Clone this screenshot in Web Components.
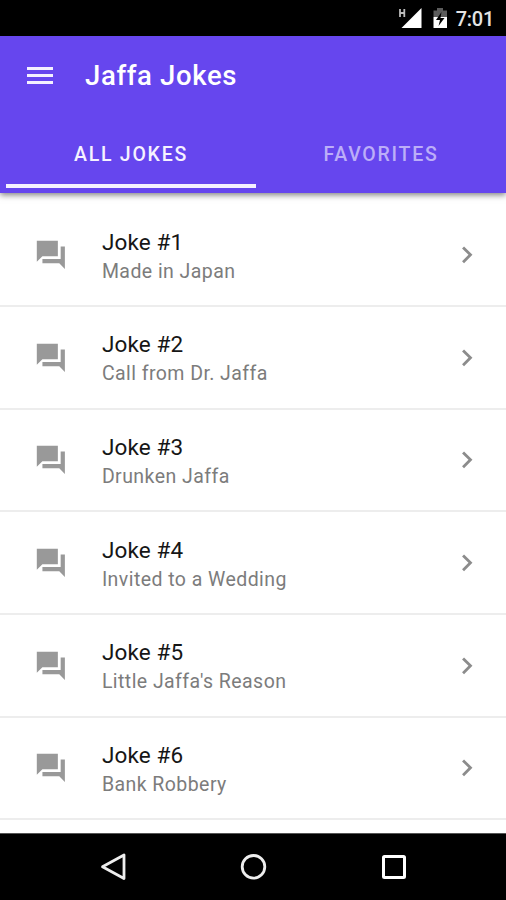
<!DOCTYPE html>
<html lang="en">
<head>
<meta charset="utf-8">
<title>Jaffa Jokes</title>
<style>
html,body{margin:0;height:100%;overflow:hidden;background:#fff;font-family:Roboto,"Noto Sans",sans-serif}
</style>
</head>
<body>
<jokes-app></jokes-app>
<script>
const define = (name, html) => customElements.define(name, class extends HTMLElement {
  constructor() {
    super();
    const t = document.createElement('template');
    t.innerHTML = html;
    this.attachShadow({mode: 'open'}).append(t.content.cloneNode(true));
  }
});

define('status-bar', `<style>
:host{display:flex;height:36px;flex:none;background:#000;color:#e4e4e4;align-items:center;justify-content:flex-end;padding-right:12px;box-sizing:border-box}
svg{display:block;flex:none}
span{font-size:20px;line-height:24px;font-weight:500;letter-spacing:-.25px;margin:2px 0 0 8px}
</style>
<svg width="26" height="24" viewBox="398 6 26 24"><path d="M400 9v8M404.300 9v8M400 13h4.300" fill="none" stroke="#bbb" stroke-width="1.800"/><path d="M421.5 8v20H401.5Z" fill="#fff"/></svg>
<svg width="16" height="24" viewBox="432 6 16 24" style="margin-left:8px"><path d="M433.5 10.500h3.500V8h6v2.500h4V17h-13.500Z" fill="#5c5c5c"/><path d="M433.500 17H447v11h-13.500Z" fill="#fff"/><path d="M441.500 12l-5.500 8h4l-1.500 6 6-8h-4Z" fill="#000"/></svg>
<span>7:01</span>`);

define('tab-item', `<style>
:host{display:flex;flex:1;align-items:center;justify-content:center;height:66px;box-sizing:border-box;padding-top:3px;border-bottom:4px solid transparent;color:#bcaef8;font-size:19.500px;font-weight:500;letter-spacing:1.750px}
:host([active]){color:#f5f2ff;border-bottom-color:#f4f1ff}
</style><slot></slot>`);

define('app-header', `<style>
:host{display:flex;flex-direction:column;flex:none;height:156.500px;background:#6646ee;box-shadow:0 2px 6px rgba(0,0,0,.5);position:relative;z-index:1}
.bar{display:flex;align-items:center;height:79px;padding-left:27px;color:#fff}
svg{display:block}
h1{margin:1px 0 0 32px;font-size:27.500px;line-height:32px;font-weight:500;letter-spacing:.65px}
nav{display:flex;padding:7px 0 0 6px}
</style>
<div class="bar"><svg width="26" height="18" viewBox="0 0 26 18"><path d="M0 1.500h26M0 8.500h26M0 15.500h26" stroke="#f4f1ff" stroke-width="3"/></svg><h1><slot></slot></h1></div>
<nav><slot name="tabs"></slot></nav>`);

define('joke-row', `<style>
:host{display:flex;align-items:center;height:102.650px;flex:none;box-sizing:border-box;border-bottom:2px solid #ededed;padding:0 22px 0 34.200px}
svg{display:block;flex:none;width:33.700px;height:33.700px}
.text{flex:1;margin-left:34px;padding-top:3.800px}
.name{font-size:22.500px;line-height:29px;color:#161616;letter-spacing:.15px}
.sub{font-size:19.500px;line-height:29px;color:#7c7c7c;letter-spacing:.44px}
</style>
<svg viewBox="0 0 24 24"><path d="M22 6h-3v9H6v3h12l4 4V6ZM17 13V2H2v15l4-4h11Z" fill="#999"/></svg>
<div class="text"><div class="name"><slot></slot></div><div class="sub"><slot name="sub"></slot></div></div>
<svg viewBox="0 0 24 24"><path d="M10 6 8.590 7.410 13.170 12l-4.580 4.590L10 18l6-6Z" fill="#8c8c8c"/></svg>`);

define('nav-bar', `<style>
:host{display:flex;flex:none;height:67px;background:#000;align-items:center;justify-content:center;gap:112px;box-sizing:border-box;border-top:1px solid #555}
svg{display:block}
</style>
<svg width="29" height="30" viewBox="0 0 29 30"><path d="M25 3v23.500L3.500 14.800Z" fill="none" stroke="#eee" stroke-width="2.800" stroke-linejoin="round"/></svg>
<svg width="28" height="30" viewBox="0 0 28 30"><circle cx="13.500" cy="14.800" r="11.300" fill="none" stroke="#eee" stroke-width="2.800"/></svg>
<svg width="28" height="30" viewBox="0 0 28 30"><rect x="3.500" y="4.500" width="21" height="21" rx="1" fill="none" stroke="#fff" stroke-width="3"/></svg>`);

define('jokes-app', `<style>
:host{display:flex;flex-direction:column;height:100vh;background:#fff}
main{flex:1;min-height:0;overflow:hidden;display:flex;flex-direction:column;padding-top:12px}
</style>
<status-bar></status-bar>
<app-header>Jaffa Jokes<tab-item slot="tabs" active>ALL JOKES</tab-item><tab-item slot="tabs">FAVORITES</tab-item></app-header>
<main>
<joke-row>Joke #1<span slot="sub">Made in Japan</span></joke-row>
<joke-row>Joke #2<span slot="sub">Call from Dr. Jaffa</span></joke-row>
<joke-row>Joke #3<span slot="sub">Drunken Jaffa</span></joke-row>
<joke-row>Joke #4<span slot="sub">Invited to a Wedding</span></joke-row>
<joke-row>Joke #5<span slot="sub">Little Jaffa's Reason</span></joke-row>
<joke-row>Joke #6<span slot="sub">Bank Robbery</span></joke-row>
</main>
<nav-bar></nav-bar>
`);
</script>
</body>
</html>
